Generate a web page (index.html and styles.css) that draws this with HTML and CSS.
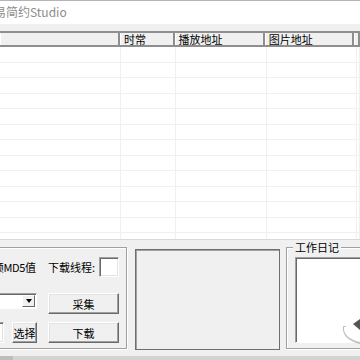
FILE: index.html
```html
<!DOCTYPE html>
<html>
<head>
	<title>易简约Studio</title>
	<link rel="stylesheet" href="styles.css">
</head>
<body>
<div class="titlebar"><span class="caption">易简约Studio</span></div>
<div class="band"></div>
<div class="list">
	<div class="hdr">
		<div class="hc c1"></div>
		<div class="hc c2">时常</div>
		<div class="hc c3">播放地址</div>
		<div class="hc c4">图片地址</div>
		<div class="hc c5"></div>
	</div>
	<div class="rows" id="rows"></div>
</div>
<div class="bottom">
	<div class="grp grp1">
		<div class="line r1">
			<div class="left md5"><span class="chk"></span>视频MD5值</div>
			<div class="right thr">下载线程:<span class="txt small"></span></div>
		</div>
		<div class="line r2">
			<div class="left top"><div class="combo"><span class="drop"><i></i></span></div></div>
			<div class="right"><button class="btn wide">采集</button></div>
		</div>
		<div class="line r3">
			<div class="left pick"><span class="txt path"></span><button class="btn sel">选择</button></div>
			<div class="right"><button class="btn wide">下载</button></div>
		</div>
	</div>
	<div class="panel"></div>
	<div class="grp grp2">
		<div class="legend">工作日记</div>
		<div class="memo"></div>
	</div>
	<svg class="curl" width="20" height="32" viewBox="0 0 20 32">
		<path d="M3,12 Q1,25 20,30 L20,27 Q7,24 6,12 Z" fill="#9a9a9a" opacity="0.6"/>
		<path d="M4,13 Q3,24 20,28 L20,25 Q8,22 7,13 Z" fill="#fff"/>
		<path d="M13,10 L20,5 L20,16 Z" fill="#555"/>
	</svg>
</div>
<div class="status"><span class="grip"></span></div>
<script type="text/javascript">
	var rows=document.getElementById("rows");
	for(var i=0;i<13;i++){
		for(var j=0;j<5;j++){
			var d=document.createElement("div");
			d.className="gc";
			rows.appendChild(d);
		}
	}
</script>
</body>
</html>
```

FILE: styles.css
```css
body{
	margin: 0;
	width: 360px;
	height: 360px;
	overflow: hidden;
	background: #f0f0f0;
	font-family: "Noto Sans CJK SC", "Liberation Sans", sans-serif;
	font-size: 11px;
	color: #000;
	position: relative;
}
.titlebar{
	height: 24px;
	box-sizing: border-box;
	border-top: 1px solid #b4b4b4;
	background: #fff;
	overflow: hidden;
	white-space: nowrap;
}
.caption{
	display: block;
	margin-left: -6px;
	font-size: 12px;
	line-height: 22px;
	color: #8c8c8c;
}
.band{
	height: 7px;
	background: #f0f0f0;
}
.list{
	height: 209px;
	box-sizing: border-box;
	background: #fff;
	border-bottom: 1px solid #d9d9d9;
	overflow: hidden;
}
.hdr{
	display: flex;
	height: 16px;
	box-sizing: border-box;
	border-top: 2px solid #8e8e8e;
	border-bottom: 2px solid #8e8e8e;
	background: #f0f0f0;
}
.hc{
	box-sizing: border-box;
	border-right: 2px solid #8e8e8e;
	box-shadow: inset 1px 0 #fff;
	padding-left: 4px;
	line-height: 12px;
	white-space: nowrap;
}
.c1{ width: 121px; }
.c2{ width: 55px; }
.c3{ width: 91px; }
.c4{ width: 90px; }
.c5{ flex: 1; }
.rows{
	display: grid;
	grid-template-columns: 121px 55px 91px 90px 1fr;
	grid-auto-rows: 15.5px;
}
.gc{
	box-sizing: border-box;
	border-right: 1px solid #f0f0f0;
	border-bottom: 1px solid #f0f0f0;
}
.bottom{
	height: 116px;
	box-sizing: border-box;
	padding-top: 7px;
	display: flex;
	align-items: flex-start;
}
.grp{
	height: 102px;
	box-sizing: border-box;
	border: 1px solid #a0a0a0;
	box-shadow: inset 1px 1px #fff, 1px 1px #fff;
	flex-shrink: 0;
}
.grp1{
	margin-left: -40px;
	width: 167px;
	padding-top: 9px;
}
.line{
	display: flex;
	gap: 11px;
}
.r1{ height: 20px; }
.r2{ height: 21px; margin-top: 16px; }
.r3{ height: 21px; margin-top: 8px; }
.left, .right{
	display: flex;
	align-items: center;
	white-space: nowrap;
	box-sizing: border-box;
	flex-shrink: 0;
}
.left{ width: 76px; }
.right{ width: 71px; }
.top{ align-items: flex-start; }
.md5{
	padding-left: 4px;
	letter-spacing: -0.3px;
}
.chk{
	width: 13px;
	height: 13px;
	margin-right: 4px;
	flex-shrink: 0;
}
.thr{
	justify-content: space-between;
}
.txt{
	display: block;
	box-sizing: border-box;
	background: #fff;
	border: 1px solid;
	border-color: #a0a0a0 #fff #fff #a0a0a0;
	box-shadow: inset 1px 1px #696969, inset -1px -1px #e3e3e3;
}
.small{
	width: 20px;
	height: 20px;
}
.combo{
	width: 76px;
	height: 16px;
	box-sizing: border-box;
	background: #fff;
	border: 1px solid;
	border-color: #a0a0a0 #fff #fff #a0a0a0;
	box-shadow: inset 1px 1px #696969;
	display: flex;
	justify-content: flex-end;
	padding: 1px 1px 1px 0;
}
.drop{
	width: 13px;
	box-sizing: border-box;
	background: #f0f0f0;
	border: 1px solid;
	border-color: #fff #696969 #696969 #fff;
	display: flex;
	align-items: center;
	justify-content: center;
}
.drop i{
	width: 0;
	height: 0;
	border-left: 3px solid transparent;
	border-right: 3px solid transparent;
	border-top: 4px solid #000;
}
.pick{
	justify-content: space-between;
}
.path{
	width: 43px;
	height: 21px;
}
.btn{
	height: 21px;
	box-sizing: border-box;
	margin: 0;
	padding: 0;
	background: #f0f0f0;
	border: 1px solid;
	border-color: #fff #696969 #696969 #fff;
	box-shadow: inset -1px -1px #a0a0a0, inset 1px 1px #e3e3e3;
	font-family: inherit;
	font-size: 11px;
	color: #000;
}
.wide{
	width: 71px;
}
.sel{
	width: 25px;
}
.panel{
	margin: 2px 0 0 8px;
	width: 145px;
	height: 101px;
	box-sizing: border-box;
	border: 1px solid #6e6e6e;
	box-shadow: inset 1px 1px #a0a0a0;
	flex-shrink: 0;
}
.grp2{
	margin-left: 6px;
	width: 110px;
	padding-left: 6px;
}
.legend{
	margin-top: -8px;
	width: fit-content;
	padding: 0 2px;
	background: #f0f0f0;
	line-height: 14px;
	white-space: nowrap;
}
.memo{
	margin: 3px 0 0 2px;
	height: 86px;
	box-sizing: border-box;
	background: #fff;
	border: 1px solid;
	border-color: #a0a0a0 #fff #fff #a0a0a0;
	box-shadow: inset 1px 1px #696969;
}
.curl{
	position: absolute;
	right: 0;
	bottom: 14px;
}
.status{
	height: 4px;
	background: #d3d3d3;
}
.grip{
	display: block;
	width: 13px;
	height: 4px;
	background: #bdbdbd;
}
```
